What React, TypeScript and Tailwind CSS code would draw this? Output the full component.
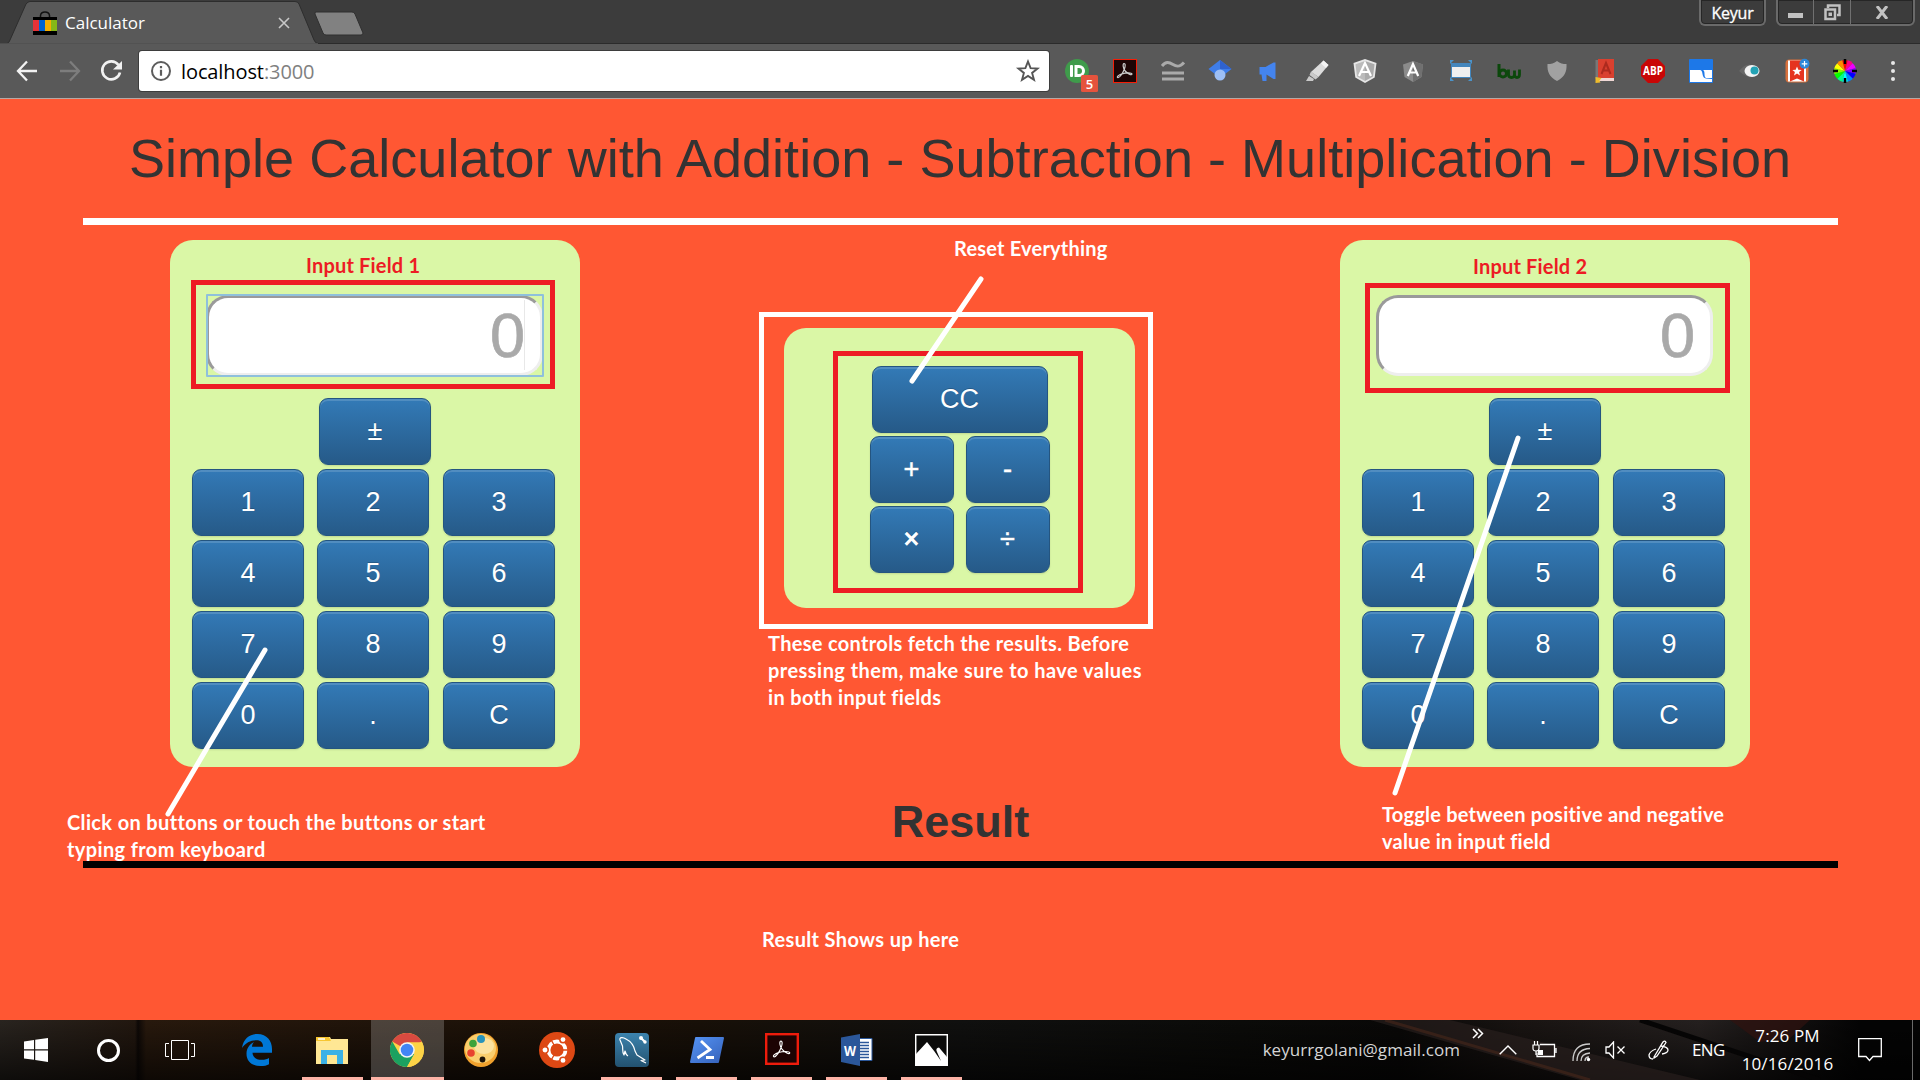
import React from "react";

const KEYS = ["1", "2", "3", "4", "5", "6", "7", "8", "9", "0", ".", "C"];

function Key({ label, className }: { label: string; className: string }) {
  return (
    <button
      className={`flex h-[67px] items-center justify-center rounded-[9px] border border-[#245580] bg-gradient-to-b from-[#337ab7] to-[#265a88] pb-px text-[27px] leading-none text-white shadow-[inset_0_2px_0_rgba(255,255,255,0.15),0_1px_2px_rgba(0,0,0,0.12)] [text-shadow:0_-1px_0_rgba(0,0,0,0.2)] ${className}`}
    >
      {label}
    </button>
  );
}

function NumberPad({ focused = false }: { focused?: boolean }) {
  return (
    <section className="flex h-[527px] w-[410px] flex-col rounded-[23px] bg-[#DAF7A6] pt-[55px] pl-[22px]">
      <div className="relative ml-[14px] h-[81px] w-[337px]">
        <div className="flex h-full w-full items-center justify-end rounded-[22px] border-[3px] border-t-[#9a9a9a] border-r-[#eeeeee] border-b-[#eeeeee] border-l-[#9a9a9a] bg-white pr-[15px] text-[63px] leading-none text-[#a9a9a9] [-webkit-text-stroke:0.7px_#a9a9a9]">
          0
        </div>
        {focused && (
          <>
            <div className="absolute -inset-px left-0 rounded-[1px] border-2 border-[#8fc0dc]" />
            <div className="absolute top-[5px] right-[18px] h-[70px] w-px bg-[#e8e8e8]" />
          </>
        )}
      </div>
      <Key label="±" className="mt-[22px] ml-[127px] w-[112px]" />
      <div className="mt-1 grid grid-cols-[125px_126px_112px] gap-y-1">
        {KEYS.map((k) => (
          <Key key={k} label={k} className="w-[112px]" />
        ))}
      </div>
    </section>
  );
}

function OperatorPad() {
  return (
    <section className="mt-[88px] mr-[2px] flex h-[280px] w-[351px] flex-col items-center rounded-[22px] bg-[#DAF7A6] pt-[38px] pl-px">
      <Key label="CC" className="w-[176px]" />
      <div className="mt-[3px] grid grid-cols-2 gap-x-3 gap-y-[3px]">
        {["+", "-", "×", "÷"].map((k) => (
          <Key key={k} label={k} className={k === "×" ? "w-[84px] font-bold" : "w-[84px] [-webkit-text-stroke:0.5px_white]"} />
        ))}
      </div>
    </section>
  );
}

const PDF_PATH =
  "M11 4.5c1.8 0 1.2 3.5.3 5.8C10 13.800 7 18.500 5 18.700c-2-.5.8-3 4-3.900 3.500-1 9.500-1.600 10 .2-.3 2-4.500-.4-6.800-3C10 9.500 9.500 4.600 11 4.500z";

const EXTENSIONS: React.ReactNode[] = [
  <>
    <circle cx="12" cy="12" r="12" fill="#3f9b4b" />
    <rect x="5" y="6" width="3" height="12" rx="1" fill="#fff" />
    <path d="M9.500 6h4.500a6 6 0 0 1 0 12H9.500z" fill="#fff" />
    <path d="M12.500 9h1.500a3 3 0 0 1 0 6h-1.500z" fill="#3f9b4b" />
    <rect x="16" y="16" width="17" height="17" rx="1.500" fill="#e5533d" />
    <text x="24.500" y="29.500" textAnchor="middle" fontFamily="Open Sans" fontSize="13" fontWeight="600" fill="#fff">5</text>
  </>,
  <>
    <rect x=".5" y=".5" width="23" height="23" fill="#1d0505" stroke="#f51d06" />
    <path d={PDF_PATH} fill="none" stroke="#ccc" strokeWidth="1.200" />
  </>,
  <g stroke="#aaa" strokeWidth="3" fill="none">
    <path d="M1 7c4-5 7-4 11-1.500S19 8 23 3.500" />
    <path d="M1 14h22M1 20h22" />
  </g>,
  <g transform="translate(-1 0)">
    <path d="M12 1l11.500 9L12 19 .5 10z" fill="#3f7de8" />
    <path d="M12 1l11.500 9H12z" fill="#2f62cf" />
    <circle cx="12" cy="16" r="5.500" fill="#9dbff5" />
  </g>,
  <path d="M2.500 8h6l8-4.500h2V20h-2l-7-4.500V22H5.500l-1-6.500h-2z" fill="#4484ee" />,
  <>
    <path d="M18.500 1.500l5 4.500-10 12-7.500-5z" fill="#dcdcdc" />
    <path d="M18.500 1.500l5 4.500-2.500 3-5-4.500z" fill="#f4f4f4" />
    <path d="M6 12.500l7.500 5.500-3 2.500-6-4.500zM4 17l5 3-1 2H1z" fill="#c9c9c9" />
  </>,
  <>
    <path d="M12 0l11.500 4-1.800 14.500L12 24l-9.700-5.500L.5 4z" fill="#e6e6e6" />
    <path d="M12 2l9.500 3.300L20 17.500 12 22z" fill="#aaa" />
    <path d="M12 2v20l-8-4.500L2.500 5.300z" fill="#bbb" />
    <path d="M6 17L12 4l6 13M8.500 13h7" stroke="#fff" strokeWidth="2.200" fill="none" />
  </>,
  <>
    <path d="M12 2l10 3.500-1.500 12.500L12 23l-8.500-5L2 5.500z" fill="#8b8b8b" />
    <path d="M12 2l10 3.500-1.500 12.500L12 23z" fill="#707070" />
    <path d="M6.800 17L12 5l5.200 12M9 13.500h6" stroke="#fff" strokeWidth="2.200" fill="none" />
  </>,
  <>
    <path d="M1 5V1h4L1 5zM19 1h4v4zM1 18v4h4zM23 18v4h-4z" fill="#4b93c9" />
    <rect x="2.500" y="4.500" width="19" height="14" fill="#efefef" stroke="#4386bd" />
    <rect x="2" y="4" width="20" height="4" fill="#4386bd" />
  </>,
  <g fill="none" stroke="#0c480c" strokeWidth="3">
    <path d="M2 5v13" />
    <circle cx="6" cy="14.500" r="3.500" />
    <path d="M11.500 10.500v5q0 3 3 3t3-3v-4v4q0 3 2.500 3t2.500-3v-5" strokeWidth="2.800" />
  </g>,
  <path d="M12 2c3 2.500 6 3 9.500 3 .5 8-2 13-9.500 17C4.500 18 2 13 2.500 5 6 5 9 4.500 12 2z" fill="#a1a1a1" />,
  <>
    <rect x="2.500" y="1" width="3" height="19" fill="#777" />
    <rect x="5" y="0" width="16" height="19" fill="#d9402f" />
    <rect x="5" y="19" width="16" height="3" fill="#f0d8d5" />
    <path d="M8.500 15L13 4l4.500 11M10 11.500h6" stroke="#ac2a1e" strokeWidth="2" fill="none" />
    <path d="M2.500 18l6 1-2 2.500 1 2-5 .5z" fill="#eebc2c" />
  </>,
  <>
    <path d="M7 0h10l7 7v10l-7 7H7l-7-7V7z" fill="#c90606" />
    <text x="12" y="16.200" textAnchor="middle" fontFamily="Open Sans" fontSize="12" fontWeight="700" textLength="20" lengthAdjust="spacingAndGlyphs" fill="#fff">ABP</text>
  </>,
  <>
    <rect width="24" height="24" rx="1" fill="#1d78e8" />
    <path d="M1 11h10q2 0 2.500 4t3.500 4.500l6 .5v3H1z" fill="#fff" />
    <path d="M14 11h9v8h-6q-1.500-.5-1.500-4T14 11z" fill="#fff" />
  </>,
  <>
    <path d="M2 12q7-8 12-6t8.500 6q-3 6-8.500 6T2 12z" fill="#686868" />
    <ellipse cx="15" cy="12" rx="7.500" ry="6" fill="#f4f4f4" />
    <circle cx="17.500" cy="11.500" r="4" fill="#22a2b4" />
  </>,
  <>
    <rect x=".5" y=".5" width="23" height="23" rx="4" fill="#d8713d" />
    <rect x="3" y="1.500" width="18" height="21" fill="#fff" />
    <path d="M5 1.500h14v21l-7-3-7 3z" fill="#e5341f" />
    <path d="M12 7.500l1.300 3.200 3.400.2-2.600 2.200.9 3.400-3-1.900-3 1.900.9-3.400-2.600-2.200 3.400-.2z" fill="#fff" />
    <circle cx="19.500" cy="4.800" r="5" fill="#2b87d8" />
    <path d="M19.500 2v5.600M16.700 4.800h5.600" stroke="#fff" strokeWidth="1.200" />
  </>,
];

const WHEEL = ["#f00", "#f08", "#e0f", "#80f", "#00f", "#08f", "#0ff", "#0f8", "#0f0", "#8f0", "#ff0", "#f80"];

function ColorWheel() {
  return (
    <svg viewBox="-12 -12 24 24" className="h-6 w-6">
      {WHEEL.map((c, i) => (
        <path key={c} d="M0 0L-2.900-10.600A11 11 0 0 1 2.900-10.600z" fill={c} transform={`rotate(${i * 30})`} />
      ))}
      <path d="M0-12v5M0 12V7M-12 0h5M12 0H7" stroke="#000" strokeWidth="2.500" />
    </svg>
  );
}

function BrowserChrome() {
  return (
    <header className="h-[99px] bg-[#595959]">
      <div className="relative flex h-11 items-start bg-[#3c3c3c] shadow-[inset_0_-1px_0_#2b2b2b]">
        <svg className="absolute inset-0 h-11 w-[380px]" viewBox="0 0 380 44">
          <path d="M0 43.500H7Q9 43 10 40L26 4Q28 1.500 30 1.500H295Q298 1.500 299 4L314 40Q315.500 43.500 318 43.500V44H0z" fill="#595959" stroke="#2d2d2d" />
          <path d="M0 44H318" stroke="#595959" strokeWidth="1.500" />
          <path d="M316 12h36q2 0 3 2l8 19q0 2-2 2h-35q-2 0-3-2l-8-19q-.5-2 1-2z" fill="#818181" stroke="#2f2f2f" />
        </svg>
        <div className="relative flex h-11 w-[310px] items-center pt-[2px] pl-[33px]">
          <svg viewBox="0 0 24 24" className="h-6 w-6">
            <path d="M7.500 7V4.500Q8 1 12 1t4.500 3.500V7" fill="none" stroke="#111" strokeWidth="1.500" />
            <path d="M0 6h24v18H0z" fill="#000" />
            <path d="M0 9h6v11H0z" fill="#e53238" />
            <path d="M6 9h6v11H6z" fill="#0064d2" />
            <path d="M12 9h6v11h-6z" fill="#f5af02" />
            <path d="M18 9h6v11h-6z" fill="#86b817" />
          </svg>
          <span className="ml-2 font-['Open_Sans'] text-[17px] text-white">Calculator</span>
          <svg viewBox="0 0 12 12" className="absolute top-[17px] left-[278px] h-3 w-3">
            <path d="M1 1l10 10M11 1L1 11" stroke="#c8c8c8" strokeWidth="1.600" />
          </svg>
        </div>
        <div className="ml-auto flex h-[26px] w-[67px] items-center justify-center rounded-b-[6px] border-2 border-t-0 border-[#6a6a6a] bg-[#3c3c3c] pt-[2px] font-['Open_Sans'] text-[16px] tracking-[-0.2px] text-white shadow-[inset_0_0_0_1px_#262626] [-webkit-text-stroke:0.3px_white]">
          Keyur
        </div>
        <div className="mr-[5px] ml-[10px] grid h-[26px] w-[139px] grid-cols-[36px_37px_1fr] divide-x divide-[#707070] rounded-b-[6px] border-2 border-t-0 border-[#6a6a6a] shadow-[inset_0_0_0_1px_#262626]">
          <div className="flex justify-center pt-[13px]">
            <div className="h-[5px] w-[15px] bg-[#c2c2c2]" />
          </div>
          <div className="flex justify-center pt-1">
            <svg viewBox="0 0 18 18" className="h-[18px] w-[18px]">
              <path d="M5 4V1.500h11.500V11H14M2.500 5.500h9.500v9.500H2.500z" fill="none" stroke="#c2c2c2" strokeWidth="2.500" />
              <rect x="5.500" y="8.500" width="3.500" height="3.500" fill="#c2c2c2" />
            </svg>
          </div>
          <div className="flex justify-center pt-[6px]">
            <svg viewBox="0 0 14 13" className="h-[13px] w-[14px]">
              <path d="M2 0l10 13M12 0L2 13" stroke="#c2c2c2" strokeWidth="3" />
            </svg>
          </div>
        </div>
      </div>
      <div className="flex h-[55px] items-center border-b border-[#b5a8a5]">
        <svg viewBox="0 0 139 40" className="h-10 w-[139px]">
          <path d="M37 20H19M27 10.500L18 20l9 9.500" fill="none" stroke="#f2f2f2" strokeWidth="2.300" />
          <path d="M60 20h18M70 10.500l9 9.500-9 9.500" fill="none" stroke="#7d7d7d" strokeWidth="2.300" />
          <path d="M118.500 14A9 9 0 1 0 120 21.500" fill="none" stroke="#f2f2f2" strokeWidth="2.600" />
          <path d="M122 10v8.500h-9z" fill="#f2f2f2" />
        </svg>
        <div className="flex h-10 w-[910px] items-center rounded-[3px] bg-white shadow-[0_0_0_1px_#3d3d3d]">
          <svg viewBox="0 0 20 20" className="ml-3 h-5 w-5">
            <circle cx="10" cy="10" r="9" fill="none" stroke="#5c5c5c" strokeWidth="2" />
            <path d="M10 8.700v6M10 5v2.300" stroke="#5c5c5c" strokeWidth="2.200" />
          </svg>
          <div className="ml-[10px] pt-px font-['Open_Sans'] text-[20px] tracking-[-0.1px] text-black">
            localhost<span className="text-[#808080]">:3000</span>
          </div>
          <svg viewBox="0 0 24 24" className="mr-[9px] ml-auto h-6 w-6">
            <path d="M12 2.500l2.600 6.600 7 .4-5.500 4.400 1.900 6.900-6-3.900-6 3.900 1.900-6.900L2.400 9.500l7-.4z" fill="none" stroke="#555" strokeWidth="1.900" />
          </svg>
        </div>
        <div className="ml-1 flex">
          {EXTENSIONS.map((icon, i) => (
            <div key={i} className="flex w-12 justify-center">
              <svg viewBox="0 0 24 24" className="h-6 w-6 overflow-visible">{icon}</svg>
            </div>
          ))}
          <div className="flex w-12 justify-center">
            <ColorWheel />
          </div>
          <div className="flex w-12 flex-col items-center justify-center gap-1">
            <i className="h-1 w-1 rounded-full bg-[#e8e8e8]" />
            <i className="h-1 w-1 rounded-full bg-[#e8e8e8]" />
            <i className="h-1 w-1 rounded-full bg-[#e8e8e8]" />
          </div>
        </div>
      </div>
    </header>
  );
}

function Slot({ children, w, open, active }: { children: React.ReactNode; w: string; open?: boolean; active?: boolean }) {
  return (
    <div className={`relative flex h-full items-center justify-center ${w} ${active ? "bg-white/20" : ""}`}>
      {children}
      {open && <div className={`absolute bottom-0 h-[3px] bg-[#fdb3a6] ${active ? "inset-x-0" : "inset-x-[7px]"}`} />}
    </div>
  );
}

function Taskbar() {
  return (
    <footer className="relative flex h-[60px] items-stretch overflow-hidden bg-[#0c0906] font-['Open_Sans'] text-[17px] text-white">
      <div className="absolute inset-0 bg-[linear-gradient(to_bottom,transparent,rgba(0,0,0,0.65)),linear-gradient(to_right,#29241f_0,#22170f_135px,#0d0806_138px,#28190d_146px,#1f1309_440px,#181008_700px,#10100f_960px,#0b0b09_1240px,#090807_1400px,#191412_1520px,#25201f_1700px,#040404_1860px)]" />
      <svg viewBox="0 0 700 60" className="absolute right-0 h-[60px] w-[700px]">
        <path d="M150 0L360 60H480L230 0z" fill="#2b211f" opacity=".6" />
        <path d="M165 0L370 60" stroke="#42251a" strokeWidth="3" opacity=".7" />
        <path d="M420 0L600 60" stroke="#060505" strokeWidth="5" />
        <path d="M510 0h80l-20 18-30 4z" fill="#31130f" opacity=".7" />
      </svg>
      <div className="relative flex w-full">
        <Slot w="w-[72px]">
          <svg viewBox="0 0 24 24" className="h-6 w-6">
            <path d="M0 3.500L10 2v9.300H0zM11.200 1.800L24 0v11.300H11.200zM0 12.500h10v9.300L0 20.500zM11.200 12.500H24V24l-12.800-2z" fill="#fff" />
          </svg>
        </Slot>
        <Slot w="w-[72px]">
          <div className="h-[23px] w-[23px] rounded-full border-[3px] border-white" />
        </Slot>
        <Slot w="w-[72px]">
          <svg viewBox="0 0 30 20" className="h-5 w-[30px]">
            <path d="M6.500.5h17v19h-17zM4 3.500H.500v13H4M26 3.500h3.500v13H26" fill="none" stroke="#fff" />
          </svg>
        </Slot>
        <Slot w="ml-1 w-[75px]">
          <svg viewBox="0 0 30 32" className="mr-[2px] h-8 w-[30px]">
            <path d="M0 14C1.500 4.500 8 0 15.500 0 25 0 30 7 30 15v3.800H10.500c.3 5 4.500 7 9 7 3.500 0 6-.9 7.500-1.900v6.300C25 31.500 22 32 18.500 32 9.500 32 4.500 27 4.500 19.800c0-5.300 3-9.500 7.500-11.800-1.500 1.700-1.900 3.500-2 4.800h11c0-4-2-6.500-6.500-6.500C8.500 6.300 3.500 9 0 14z" fill="#0078d7" />
          </svg>
        </Slot>
        <Slot w="w-[75px]" open>
          <svg viewBox="0 0 32 27" className="mr-px h-[27px] w-8">
            <path d="M0 0h14l1 2h17v25H0z" fill="#ffe794" />
            <path d="M0 0h13l2 4H0z" fill="#f7c631" />
            <path d="M2 2h7" stroke="#fff" strokeWidth="1.500" />
            <path d="M5 13h22v14h-6v-9H11v9H5z" fill="#3bb1e6" />
          </svg>
        </Slot>
        <Slot w="ml-[1px] w-[73px]" open active>
          <svg viewBox="0 0 48 48" className="mr-[2px] h-[34px] w-[34px]">
            <circle cx="24" cy="24" r="24" fill="#fdd347" />
            <path d="M24 24L3.200 12A24 24 0 0 1 44.800 12z" fill="#d94a40" />
            <path d="M3.200 12A24 24 0 0 0 24 48L34.400 30 24 24 13.600 30z" fill="#1ba160" />
            <path d="M24 13H45.300A24 24 0 0 1 24 48L34 30z" fill="#fdd347" />
            <circle cx="24" cy="24" r="11" fill="#f4f4f4" />
            <circle cx="24" cy="24" r="8.800" fill="#4285f4" />
          </svg>
        </Slot>
        <Slot w="w-[75px]">
          <svg viewBox="0 0 36 36" className="mr-[2px] h-9 w-9">
            <circle cx="18" cy="18" r="17" fill="#f0a12d" />
            <ellipse cx="17.500" cy="16.500" rx="15.500" ry="14.500" fill="#f9ce6e" />
            <ellipse cx="21" cy="14" rx="10" ry="8" fill="#fbe2a0" />
            <circle cx="18" cy="7" r="4" fill="#2793bb" />
            <circle cx="10" cy="11.500" r="3.800" fill="#3ca33a" />
            <circle cx="8" cy="21" r="3.800" fill="#e8432f" />
            <circle cx="19.500" cy="27.500" r="2.900" fill="#1c1207" />
          </svg>
        </Slot>
        <Slot w="w-[75px]">
          <svg viewBox="-18 -18 36 36" className="h-9 w-9">
            <circle r="18" fill="#dd4814" />
            <circle r="8.500" fill="none" stroke="#fff" strokeWidth="3.800" />
            <g fill="#fff" stroke="#dd4814" strokeWidth="1.500">
              <circle cx="-12" r="3.200" />
              <circle cx="6" cy="-10.400" r="3.200" />
              <circle cx="6" cy="10.400" r="3.200" />
            </g>
            <path d="M5.500 0H12M-2.800-4.800L-6-10.400M-2.800 4.800L-6 10.400" stroke="#dd4814" strokeWidth="1.300" />
          </svg>
        </Slot>
        <Slot w="w-[75px]" open>
          <svg viewBox="0 0 34 34" className="h-[34px] w-[34px]">
            <defs>
              <linearGradient id="sea" x2="0" y2="1">
                <stop stopColor="#3c83ae" />
                <stop offset="1" stopColor="#23526f" />
              </linearGradient>
            </defs>
            <rect width="34" height="34" rx="4" fill="url(#sea)" />
            <path d="M13 23q-2-1-3-5l-1 4c-2-3-1-6-1.500-9L5 7C4 4 8 4 11 6c6 3 8 7 9 12l2 4 8 5-4 .5 5 2.500" fill="none" stroke="#fff" strokeWidth="1.200" strokeLinejoin="round" />
            <path d="M26 5l4 4" stroke="#fff" strokeWidth="2.200" />
            <circle cx="26" cy="5" r="2" fill="#fff" />
            <circle cx="30" cy="9" r="1.700" fill="#fff" />
          </svg>
        </Slot>
        <Slot w="w-[75px]" open>
          <svg viewBox="0 0 34 26" className="h-[26px] w-[34px]">
            <defs>
              <linearGradient id="shell" x2="1" y2="1">
                <stop stopColor="#5594f5" />
                <stop offset="1" stopColor="#3561b9" />
              </linearGradient>
            </defs>
            <path d="M6 0h27q1 0 1 1l-5 24q0 1-1 1H1q-1 0-1-1L5 1q0-1 1-1z" fill="url(#shell)" />
            <path d="M11 4l9 8.500L7.500 21M16 20.500h8" fill="none" stroke="#fff" strokeWidth="2.800" />
          </svg>
        </Slot>
        <Slot w="w-[75px]" open>
          <svg viewBox="0 0 34 32" className="mb-[3px] h-8 w-[34px]">
            <rect x="1.200" y="1.200" width="31.600" height="29.600" fill="#1c0303" stroke="#ee1c0c" strokeWidth="2.400" />
            <g transform="translate(3.500 3) scale(1.120)">
              <path d={PDF_PATH} fill="none" stroke="#fff" strokeWidth="1" />
            </g>
          </svg>
        </Slot>
        <Slot w="w-[75px]" open>
          <svg viewBox="0 0 32 32" className="h-8 w-8">
            <path d="M17 4.500h14v22H17z" fill="#fff" stroke="#2b579a" />
            <path d="M18 8.500h10M18 11.500h10M18 14.500h10M18 17.500h10M18 20.500h10M18 23.500h10" stroke="#2b579a" strokeWidth="1.300" />
            <path d="M0 3.500L19 0v32L0 28z" fill="#2b579a" />
            <text x="9" y="21.500" textAnchor="middle" fontFamily="Open Sans" fontSize="15" fontWeight="700" textLength="12" lengthAdjust="spacingAndGlyphs" fill="#fff">W</text>
          </svg>
        </Slot>
        <Slot w="w-[75px]" open>
          <svg viewBox="0 0 33 32" className="h-8 w-[33px]">
            <path d="M.7.700h31.600v30.600H.700z" fill="#0b0b0a" stroke="#fff" strokeWidth="1.500" />
            <path d="M1 20L12 8l7.500 9.500 6.500 9.500-4-9q-2-4 2-4.500l8 9.500v8H1z" fill="#fff" />
          </svg>
        </Slot>
        <div className="ml-auto flex h-full items-center">
          <span className="tracking-[0.06px] text-[#d5d5d5]">keyurrgolani@gmail.com</span>
          <svg viewBox="0 0 12 11" className="mb-[33px] ml-3 h-[11px] w-3">
            <path d="M1 1l4.500 4.500L1 10M6 1l4.500 4.500L6 10" fill="none" stroke="#fff" strokeWidth="1.500" />
          </svg>
          <svg viewBox="0 0 18 10" className="ml-[15px] h-[10px] w-[18px]">
            <path d="M.7 9.300L9 1l8.300 8.300" fill="none" stroke="#fff" strokeWidth="1.400" />
          </svg>
          <svg viewBox="0 0 25 18" className="ml-[15px] h-[18px] w-[25px]">
            <path d="M8 3.500h14.500v12H5v-4M24 7v5" fill="none" stroke="#fff" strokeWidth="1.300" />
            <path d="M1 4h6v3.500Q7 10 4 10T1 7.500zM2.500 0v4M5.500 0v4M4 10v4" fill="none" stroke="#fff" strokeWidth="1.200" />
            <path d="M6 9h5v5H6z" fill="#fff" />
          </svg>
          <svg viewBox="0 0 19 19" className="mt-1 ml-[15px] h-[19px] w-[19px]">
            <g fill="none" stroke="#ccc" strokeWidth="1.300">
              <path d="M1 18Q1 1 18 1M5 18Q5 6 18 5.500M9 18Q9 10.500 18 10M13 18Q13 14 17 14" />
            </g>
            <circle cx="16.500" cy="16.500" r="1.700" fill="#fff" />
          </svg>
          <svg viewBox="0 0 21 18" className="ml-[14px] h-[18px] w-[21px]">
            <path d="M1 6h3l4.500-5v16L4 12H1zM12.500 5.500l7 7M19.500 5.500l-7 7" fill="none" stroke="#fff" strokeWidth="1.300" />
          </svg>
          <svg viewBox="0 0 21 20" className="ml-[22px] h-5 w-[21px]">
            <path d="M6 17L15 2q2-2 3 .5L9 16l-3 2zM13 6q7 1 7 4t-6 4M8 9q-6 2-7 6 0 4 4 4" fill="none" stroke="#fff" strokeWidth="1.300" />
          </svg>
          <span className="ml-[23px] w-[35px] text-[17px] tracking-[-0.6px]">ENG</span>
          <div className="ml-[14px] w-[93px] text-center text-[17px] leading-7 whitespace-nowrap">
            <div className="tracking-[0.1px]">7:26 PM</div>
            <div className="tracking-[0.15px]">10/16/2016</div>
          </div>
          <svg viewBox="0 0 24 24" className="ml-6 h-6 w-6">
            <path d="M.7.700h22.600v17.800H15L11.500 22.500 8 18.500H.700z" fill="none" stroke="#fff" strokeWidth="1.300" />
          </svg>
          <div className="ml-[30px] h-full w-px bg-[#6a6a6a]" />
          <div className="w-[7px]" />
        </div>
      </div>
    </footer>
  );
}

function Note({ className, children }: { className: string; children: React.ReactNode }) {
  return (
    <div className={`absolute font-['Lato'] text-[20px] leading-[27px] font-bold whitespace-nowrap [font-variant-ligatures:none] ${className}`}>
      {children}
    </div>
  );
}

function Annotations() {
  return (
    <div className="pointer-events-none absolute inset-0">
      <div className="absolute top-[280px] left-[191px] h-[109px] w-[364px] border-[5px] border-[#ed1c24]" />
      <div className="absolute top-[283px] left-[1365px] h-[110px] w-[365px] border-[5px] border-[#ed1c24]" />
      <div className="absolute top-[312px] left-[759px] h-[317px] w-[394px] border-[5px] border-white" />
      <div className="absolute top-[351px] left-[833px] h-[242px] w-[250px] border-[5px] border-[#ed1c24]" />
      <svg viewBox="0 0 1920 1080" className="absolute inset-0 h-full w-full">
        <path d="M981 279L912 381M265 650L168 814M1518 438L1395 793" stroke="#fff" strokeWidth="5" strokeLinecap="round" />
      </svg>
      <Note className="top-[252px] left-[306px] tracking-[0.18px] text-[#ed1c24]">Input Field 1</Note>
      <Note className="top-[253px] left-[1473px] tracking-[0.18px] text-[#ed1c24]">Input Field 2</Note>
      <Note className="top-[235px] left-[954px] tracking-[0.2px] text-white">Reset Everything</Note>
      <Note className="top-[630px] left-[768px] text-white">
        <div className="tracking-[0.32px]">These controls fetch the results. Before</div>
        <div className="tracking-[0.46px]">pressing them, make sure to have values</div>
        <div className="tracking-[0.33px]">in both input fields</div>
      </Note>
      <Note className="top-[809px] left-[67px] text-white">
        <div className="tracking-[0.36px]">Click on buttons or touch the buttons or start</div>
        <div className="tracking-[0.37px]">typing from keyboard</div>
      </Note>
      <Note className="top-[801px] left-[1382px] text-white">
        <div className="tracking-[0.23px]">Toggle between positive and negative</div>
        <div className="tracking-[0.23px]">value in input field</div>
      </Note>
      <Note className="top-[926px] left-[762px] tracking-[0.34px] text-white">Result Shows up here</Note>
    </div>
  );
}

export default function App() {
  return (
    <div className="relative flex h-[1080px] w-[1920px] flex-col overflow-hidden font-['Liberation_Sans',sans-serif]">
      <BrowserChrome />
      <main className="flex-1 bg-[#FF5733] px-[83px] pt-[30px] text-[#333333]">
        <h1 className="h-[89px] text-center text-[54px] leading-[59px] tracking-[0.035px] whitespace-nowrap">
          Simple Calculator with Addition - Subtraction - Multiplication - Division
        </h1>
        <hr className="h-[7px] w-[1755px] border-0 bg-white" />
        <div className="mt-[15px] flex h-[527px] items-start justify-between pr-[87px] pl-[87px]">
          <NumberPad focused />
          <OperatorPad />
          <NumberPad />
        </div>
        <h2 className="mt-[30px] h-16 w-[1755px] text-center text-[45px] leading-[50px] font-bold">Result</h2>
        <hr className="h-[7px] w-[1755px] border-0 bg-black" />
      </main>
      <Taskbar />
      <Annotations />
    </div>
  );
}
